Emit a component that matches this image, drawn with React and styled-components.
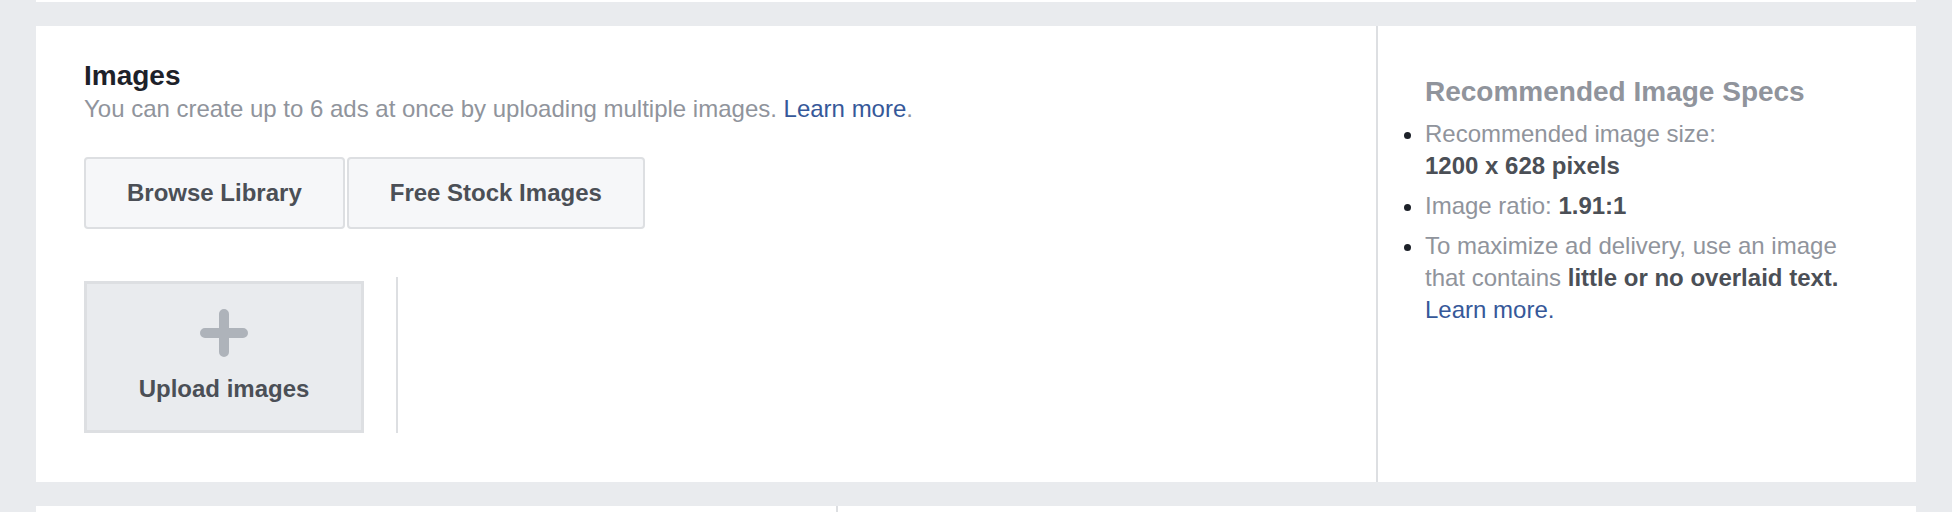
import React from 'react';
import styled, { createGlobalStyle } from 'styled-components';

const GlobalStyle = createGlobalStyle`
  body {
    margin: 0;
    background: #e9ebee;
    font-family: "Liberation Sans", Arial, sans-serif;
    overflow: hidden;
  }
`;

const Page = styled.div`
  padding: 0 36px;
  height: 512px;
  overflow: hidden;
`;

const PrevCardEdge = styled.div`
  height: 2px;
  background: #fff;
`;

const Card = styled.section`
  display: flex;
  height: 456px;
  margin-top: 24px;
  background: #fff;
`;

const Main = styled.div`
  flex: 1;
  padding: 33px 48px 0 48px;
`;

const Title = styled.h2`
  margin: 0;
  font-size: 28px;
  line-height: 34px;
  font-weight: bold;
  color: #1d2129;
`;

const Description = styled.p`
  margin: 0;
  font-size: 24px;
  line-height: 32px;
  color: #90949c;
`;

const Link = styled.a`
  color: #365899;
  text-decoration: none;
`;

const ButtonRow = styled.div`
  display: flex;
  gap: 2px;
  margin-top: 32px;
`;

const Button = styled.button`
  height: 72px;
  padding: 0 41px;
  border: 2px solid #dddfe2;
  border-radius: 4px;
  background: #f6f7f9;
  color: #4b4f56;
  font-family: inherit;
  font-size: 24px;
  font-weight: bold;
  cursor: pointer;
`;

const UploadRow = styled.div`
  display: flex;
  align-items: flex-start;
  gap: 32px;
  margin-top: 48px;
`;

const UploadBox = styled.div`
  box-sizing: border-box;
  display: flex;
  flex-direction: column;
  align-items: center;
  gap: 16px;
  width: 280px;
  height: 152px;
  margin-top: 4px;
  padding-top: 25px;
  border: 3px solid #dddfe2;
  background: #e9ebee;
`;

const UploadLabel = styled.span`
  font-size: 24px;
  line-height: 32px;
  font-weight: bold;
  color: #4b4f56;
`;

const VDivider = styled.div`
  width: 2px;
  height: 156px;
  background: #dddfe2;
`;

const Side = styled.aside`
  width: 443px;
  padding: 50px 48px 0 47px;
  border-left: 2px solid #dddfe2;
`;

const SideTitle = styled.h3`
  margin: 0;
  font-size: 28px;
  line-height: 32px;
  font-weight: bold;
  color: #90949c;
`;

const SpecList = styled.ul`
  margin: 10px 0 0;
  padding: 0;
  list-style: disc outside;
`;

const SpecItem = styled.li`
  margin-bottom: 8px;
  font-size: 24px;
  line-height: 32px;
  color: #90949c;

  &::marker {
    color: #1d2129;
  }
`;

const Strong = styled.b`
  color: #4b4f56;
`;

const NextCard = styled.div`
  display: flex;
  height: 40px;
  margin-top: 24px;
  background: #fff;
`;

const NextCol = styled.div`
  width: ${p => p.$width || 'auto'};
  flex: ${p => (p.$width ? 'none' : 1)};
  border-left: ${p => (p.$divided ? '2px solid #dddfe2' : 'none')};
`;

const PlusIcon = () => (
  <svg width="48" height="48" viewBox="0 0 48 48">
    <path d="M24 5v38M5 24h38" stroke="#aeb3ba" strokeWidth="10" strokeLinecap="round" />
  </svg>
);

export default function App() {
  return (
    <Page>
      <GlobalStyle />
      <PrevCardEdge />
      <Card>
        <Main>
          <Title>Images</Title>
          <Description>
            You can create up to 6 ads at once by uploading multiple images. <Link href="#">Learn more</Link>.
          </Description>
          <ButtonRow>
            <Button>Browse Library</Button>
            <Button>Free Stock Images</Button>
          </ButtonRow>
          <UploadRow>
            <UploadBox>
              <PlusIcon />
              <UploadLabel>Upload images</UploadLabel>
            </UploadBox>
            <VDivider />
          </UploadRow>
        </Main>
        <Side>
          <SideTitle>Recommended Image Specs</SideTitle>
          <SpecList>
            <SpecItem>
              Recommended image size:
              <br />
              <Strong>1200 x 628 pixels</Strong>
            </SpecItem>
            <SpecItem>
              Image ratio: <Strong>1.91:1</Strong>
            </SpecItem>
            <SpecItem>
              To maximize ad delivery, use an image that contains <Strong>little or no overlaid text.</Strong>{' '}
              <Link href="#">Learn more.</Link>
            </SpecItem>
          </SpecList>
        </Side>
      </Card>
      <NextCard>
        <NextCol $width="800px" />
        <NextCol $divided />
      </NextCard>
    </Page>
  );
}
